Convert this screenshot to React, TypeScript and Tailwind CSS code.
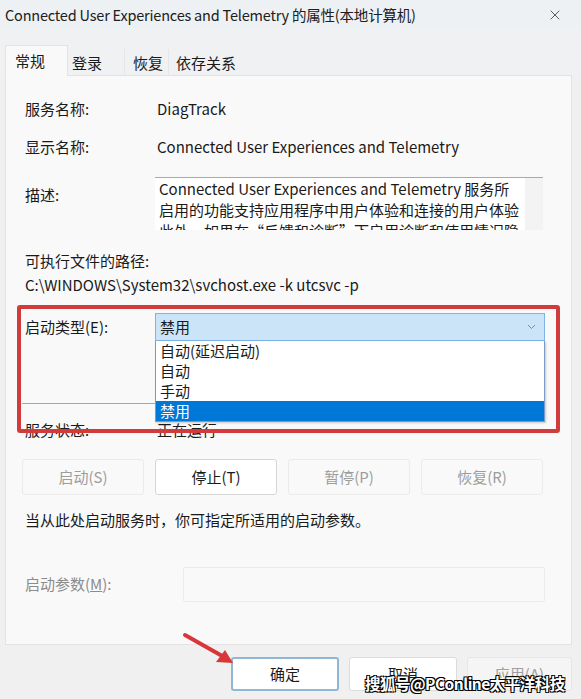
import { X } from "lucide-react";

const font = "font-['Noto_Sans_CJK_SC','Noto_Sans',sans-serif]";

function Row({ label, value }: { label: string; value: string }) {
  return (
    <div className="flex h-[20px] items-center leading-[20px]">
      <div className="w-[130px]">{label}</div>
      <div className="pl-[2px]">{value}</div>
    </div>
  );
}

function SvcButton({ label, enabled }: { label: string; enabled?: boolean }) {
  return (
    <div
      className={
        enabled
          ? "flex h-[36px] w-[122px] items-center justify-center rounded-[3px] border border-[#d6d6d6] bg-white text-[#1a1a1a]"
          : "flex h-[36px] w-[122px] items-center justify-center rounded-[3px] border border-[#ebebeb] bg-[#f9f9f9] text-[#9d9d9d]"
      }
    >
      {label}
    </div>
  );
}

export default function App() {
  return (
    <div
      className={`relative h-[699px] w-[581px] overflow-hidden bg-[#f0f0f0] text-[15px] text-[#1a1a1a] ${font}`}
    >
      {/* title bar */}
      <div className="flex h-[30px] items-center justify-between bg-[#eef1f4] pl-[5px] pr-[18px]">
        <span className="text-[14.5px] tracking-[-0.2px] text-[#202020]">
          Connected User Experiences and Telemetry 的属性(本地计算机)
        </span>
        <X className="size-[16px] text-[#333]" strokeWidth={1.2} />
      </div>

      {/* tabs */}
      <div className="flex h-[45px] items-end bg-[#eff1f3] pl-[5px]">
        <div className="relative z-10 -mb-px flex h-[31px] w-[63px] items-start border border-b-0 border-[#e3e3e3] bg-[#f9f9f9] pl-[9px] pt-[4px]">
          常规
        </div>
        <div className="flex h-[26px] w-[57px] items-start border-r border-[#e6e6e6] pl-[4px] pt-[3px]">登录</div>
        <div className="flex h-[26px] w-[44px] items-start border-r border-[#e6e6e6] pl-[8px] pt-[3px]">恢复</div>
        <div className="flex h-[26px] w-[85px] items-start pl-[7px] pt-[3px]">依存关系</div>
      </div>

      {/* panel */}
      <div className="ml-[5px] h-[570px] w-[567px] border border-[#e3e3e3] bg-[#f9f9f9] pl-[19px] pt-[23px]">
        <Row label="服务名称:" value="DiagTrack" />
        <div className="mt-[18px]">
          <Row label="显示名称:" value="Connected User Experiences and Telemetry" />
        </div>

        <div className="mt-[20px] flex">
          <div className="mt-[8px] w-[130px] leading-[20px]">描述:</div>
          <div className="flex h-[53px] w-[388px] overflow-hidden border-t border-[#a9a9a9] bg-white">
            <div className="flex-1 pl-[4px] leading-[21px]">
              <div>Connected User Experiences and Telemetry 服务所</div>
              <div>启用的功能支持应用程序中用户体验和连接的用户体验</div>
              <div>此外，如果在“反馈和诊断”下启用诊断和使用情况隐</div>
            </div>
            <div className="w-[18px] bg-[#f3f3f3]" />
          </div>
        </div>

        <div className="mt-[21px] leading-[20px]">可执行文件的路径:</div>
        <div className="mt-[4px] leading-[20px]">C:\WINDOWS\System32\svchost.exe -k utcsvc -p</div>

        <div className="mt-[18px] flex items-center">
          <div className="w-[130px]">启动类型(E):</div>
          <div className="flex h-[28px] w-[390px] items-center justify-between border border-[#7eb4ea] bg-[#cce4f7] pl-[4px] pr-[8px]">
            <span>禁用</span>
            <svg width="9" height="6" viewBox="0 0 9 6" fill="none">
              <path d="M1 1l3.5 3.5L8 1" stroke="#8a8a8a" strokeWidth="1" />
            </svg>
          </div>
        </div>

        <div className="-ml-[3px] mt-[62px] h-px w-[523px] bg-[#a8a8a8]" />

        <div className="mt-[16px]">
          <Row label="服务状态:" value="正在运行" />
        </div>

        <div className="-ml-[3px] mt-[19px] flex gap-[11px]">
          <SvcButton label="启动(S)" />
          <SvcButton label="停止(T)" enabled />
          <SvcButton label="暂停(P)" />
          <SvcButton label="恢复(R)" />
        </div>

        <div className="mt-[15px] leading-[20px]">当从此处启动服务时，你可指定所适用的启动参数。</div>

        <div className="mt-[37px] flex items-center">
          <div className="w-[158px] text-[#8c8c8c]">
            启动参数(<span className="underline">M</span>):
          </div>
          <div className="h-[35px] w-[362px] rounded-[2px] border border-[#ececec] bg-[#f9f9f9]" />
        </div>
      </div>

      {/* dialog buttons */}
      <div className="mt-[12px] flex justify-end gap-[10px] pr-[9px]">
        <div className="flex h-[34px] w-[108px] items-center justify-center rounded-[3px] border-2 border-[#8fb7d6] bg-white">
          确定
        </div>
        <div className="flex h-[34px] w-[108px] items-center justify-center rounded-[3px] border border-[#dcdcdc] bg-white">
          取消
        </div>
        <div className="flex h-[34px] w-[105px] items-center justify-center rounded-[3px] border border-[#e6e6e6] bg-[#f5f5f5] text-[#a0a0a0]">
          应用(A)
        </div>
      </div>

      {/* open dropdown list */}
      <div className="absolute left-[155px] top-[341px] w-[390px] border border-t-0 border-[#7a9cc4] bg-white leading-[20px] shadow-[1px_1px_2px_rgba(0,0,0,0.2)]">
        <div className="h-[20px] pl-[4px]">自动(延迟启动)</div>
        <div className="h-[20px] pl-[4px]">自动</div>
        <div className="h-[20px] pl-[4px]">手动</div>
        <div className="h-[20px] bg-[#0078d7] pl-[4px] text-white">禁用</div>
      </div>

      {/* red highlight */}
      <div className="absolute left-[17px] top-[305px] h-[128px] w-[543px] rounded-[3px] border-4 border-[#d23b3b]" />

      {/* red arrow */}
      <svg className="absolute left-[180px] top-[630px]" width="60" height="40" viewBox="0 0 60 40">
        <line x1="5" y1="5" x2="44" y2="27" stroke="#d9363a" strokeWidth="4" strokeLinecap="round" />
        <path d="M53 33 L36 32 L45 20 Z" fill="#d9363a" />
      </svg>

      {/* watermark */}
      <div className="absolute left-[365px] top-[672px] whitespace-nowrap text-[15.5px] font-bold leading-[22px] tracking-[-0.5px] text-white [text-shadow:1px_1px_0_#000,-1px_-1px_0_#000,1px_-1px_0_#000,-1px_1px_0_#000]">
        搜狐号@PConline太平洋科技
      </div>
    </div>
  );
}
